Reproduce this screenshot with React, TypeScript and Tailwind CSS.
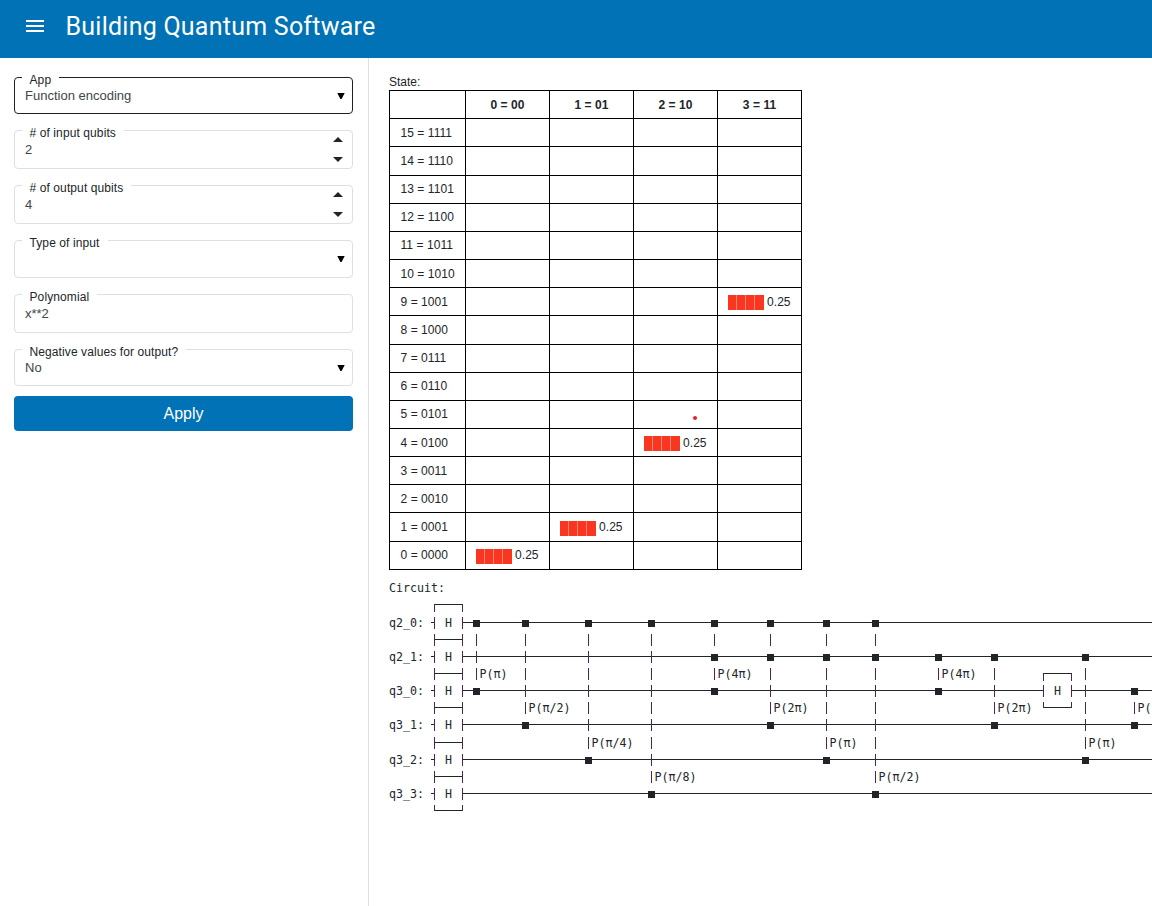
const WIRES = [622, 656, 690, 724, 759, 793];
const GAPS = [639, 673, 707, 742, 776];
const QUBITS = ["q2_0:", "q2_1:", "q3_0:", "q3_1:", "q3_2:", "q3_3:"];

interface Gate {
  x: number;
  controls: number[];
  target: number;
  label: string;
}

const GATES: Gate[] = [
  { x: 476, controls: [0], target: 2, label: "P(π)" },
  { x: 525, controls: [0], target: 3, label: "P(π/2)" },
  { x: 588, controls: [0], target: 4, label: "P(π/4)" },
  { x: 651, controls: [0], target: 5, label: "P(π/8)" },
  { x: 714, controls: [0, 1], target: 2, label: "P(4π)" },
  { x: 770, controls: [0, 1], target: 3, label: "P(2π)" },
  { x: 826, controls: [0, 1], target: 4, label: "P(π)" },
  { x: 875, controls: [0, 1], target: 5, label: "P(π/2)" },
  { x: 938, controls: [1], target: 2, label: "P(4π)" },
  { x: 994, controls: [1], target: 3, label: "P(2π)" },
  { x: 1085, controls: [1], target: 4, label: "P(π)" },
  { x: 1134, controls: [2], target: 3, label: "P(" },
];

function HLine({ x1, x2, y }: { x1: number; x2: number; y: number }) {
  return <rect x={x1} y={y} width={x2 - x1} height={1} />;
}

function VLine({ x, y1, y2 }: { x: number; y1: number; y2: number }) {
  return <rect x={x} y={y1} width={1} height={y2 - y1} className="fill-[#4c2458]" />;
}

function Phase({ gate }: { gate: Gate }) {
  const first = gate.controls[0];
  const dots = [...gate.controls, gate.target];
  const rows = WIRES.map((_, i) => i).filter((i) => i >= first && i <= gate.target);
  return (
    <g>
      {rows.map((i) =>
        dots.includes(i) ? (
          <rect key={i} x={gate.x - 3} y={WIRES[i] - 2} width={7} height={7} />
        ) : (
          <VLine key={i} x={gate.x} y1={WIRES[i] - 5} y2={WIRES[i] + 7} />
        ),
      )}
      {rows.slice(0, -1).map((i) => (
        <VLine key={i} x={gate.x} y1={GAPS[i] - 5} y2={GAPS[i] + 7} />
      ))}
      <text x={gate.x + 3.5} y={GAPS[gate.target - 1] + 5}>
        {gate.label}
      </text>
    </g>
  );
}

function Circuit() {
  return (
    <svg
      width="763"
      height="240"
      viewBox="389 578 763 240"
      shapeRendering="crispEdges"
      className="block fill-[#212529] font-['DejaVu_Sans_Mono',monospace] text-[11.63px]"
    >
      <text x="389" y="592">Circuit:</text>
      {QUBITS.map((q, i) => (
        <g key={q}>
          <text x="389" y={WIRES[i] + 5}>{q}</text>
          <text x="445" y={WIRES[i] + 5}>H</text>
          <HLine x1={431} x2={434} y={WIRES[i]} />
          {i === 2 ? (
            <>
              <HLine x1={462} x2={1043} y={WIRES[i]} />
              <HLine x1={1071} x2={1152} y={WIRES[i]} />
            </>
          ) : (
            <HLine x1={462} x2={1152} y={WIRES[i]} />
          )}
          <VLine x={434} y1={WIRES[i] - 5} y2={WIRES[i] + 7} />
          <VLine x={462} y1={WIRES[i] - 5} y2={WIRES[i] + 7} />
        </g>
      ))}
      <HLine x1={434} x2={463} y={604} />
      <VLine x={434} y1={604} y2={612} />
      <VLine x={462} y1={604} y2={612} />
      {GAPS.map((y) => (
        <g key={y}>
          <HLine x1={434} x2={463} y={y} />
          <VLine x={434} y1={y - 5} y2={y + 7} />
          <VLine x={462} y1={y - 5} y2={y + 7} />
        </g>
      ))}
      <HLine x1={434} x2={463} y={810} />
      <VLine x={434} y1={805} y2={811} />
      <VLine x={462} y1={805} y2={811} />

      <HLine x1={1043} x2={1072} y={673} />
      <HLine x1={1043} x2={1072} y={707} />
      {[1043, 1071].map((x) => (
        <g key={x}>
          <VLine x={x} y1={673} y2={681} />
          <VLine x={x} y1={685} y2={697} />
          <VLine x={x} y1={702} y2={708} />
        </g>
      ))}
      <text x="1054" y="695">H</text>
      {GATES.map((g) => (
        <Phase key={g.x} gate={g} />
      ))}
    </svg>
  );
}

function Bar() {
  return (
    <div className="flex h-full items-center pl-[10px]">
      <span className="mt-[2px] flex h-[15px] w-9 gap-px bg-[#fb8a7c]">
        <span className="w-[8px] bg-[#fa3620]" />
        <span className="w-[8px] bg-[#fa3620]" />
        <span className="w-[8px] bg-[#fa3620]" />
        <span className="w-[9px] bg-[#fa3620]" />
      </span>
      <span className="ml-[3px]">0.25</span>
    </div>
  );
}

const HEADS = ["0 = 00", "1 = 01", "2 = 10", "3 = 11"];
const FILLED: Record<number, number> = { 9: 3, 4: 2, 1: 1, 0: 0 };
const STATES = Array.from({ length: 16 }, (_, i) => 15 - i);

function StateTable() {
  return (
    <div className="mt-[0.125px] w-[413px] border-t border-l border-black text-xs tracking-[0.06px]">
      <div className="-mt-px grid h-[28.16px] grid-cols-[76px_84px_84px_84px_84px] font-bold">
        <div className="border-r border-black" />
        {HEADS.map((h) => (
          <div key={h} className="flex items-center justify-center border-r border-black pt-px">
            {h}
          </div>
        ))}
      </div>
      {STATES.map((n) => (
        <div
          key={n}
          className="grid h-[28.16px] grid-cols-[76px_84px_84px_84px_84px] border-t border-black last:h-[29.16px] last:border-b"
        >
          <div className="flex items-center border-r border-black pl-[10.5px]">
            {n} = {n.toString(2).padStart(4, "0")}
          </div>
          {HEADS.map((h, c) => (
            <div key={h} className="relative border-r border-black">
              {FILLED[n] === c && <Bar />}
              {n === 5 && c === 2 && (
                <span className="absolute top-[15px] left-[59px] size-1 rounded-full bg-[#ee1c25]" />
              )}
            </div>
          ))}
        </div>
      ))}
    </div>
  );
}

function Triangle({ up = false, wide = false }: { up?: boolean; wide?: boolean }) {
  return wide ? (
    <svg width="10" height="5" viewBox="0 0 10 5" className="fill-[#212529]">
      <path d={up ? "M0 5 5 0 10 5Z" : "M0 0 5 5 10 0Z"} />
    </svg>
  ) : (
    <svg width="8" height="6" viewBox="0 0 8 6" className="fill-black">
      <path d="M0.3 0H7.7L4.6 6H3.4Z" />
    </svg>
  );
}

interface FieldProps {
  label: string;
  value: string;
  kind: "select" | "number" | "text";
  box: string;
}

function Field({ label, value, kind, box }: FieldProps) {
  return (
    <div className={`relative flex justify-between rounded-[4px] border pl-[10px] ${box}`}>
      <span className="absolute -top-[7px] left-[7px] bg-white pr-[8px] pl-[7.5px] text-xs leading-[18px] tracking-[0.1px] text-[#212529]">
        {label}
      </span>
      <span
        className={`text-[13px] leading-4 text-[#40464c] ${kind === "select" ? "pt-[10px]" : "pt-[11px]"}`}
      >
        {value}
      </span>
      {kind === "select" && (
        <span className="pt-[15px] pr-[7px]">
          <Triangle />
        </span>
      )}
      {kind === "number" && (
        <span className="flex flex-col gap-[15px] pt-[6px] pr-[9px]">
          <Triangle up wide />
          <Triangle wide />
        </span>
      )}
    </div>
  );
}

export default function App() {
  return (
    <div className="flex h-[906px] w-[1152px] flex-col overflow-hidden bg-white font-['Liberation_Sans',Arial,sans-serif] text-[#212529]">
      <header className="flex h-[58px] shrink-0 items-center bg-[#0072b5] pb-[5px] text-white">
        <svg
          width="18"
          height="12"
          viewBox="0 0 18 12"
          className="mb-px ml-[26px] fill-white"
          shapeRendering="crispEdges"
        >
          <path d="M0 0H18V2H0ZM0 5H18V7H0ZM0 10H18V12H0Z" />
        </svg>
        <h1 className="ml-[21.5px] font-['Roboto',sans-serif] text-[25px] leading-8 tracking-[0.24px]">
          Building Quantum Software
        </h1>
      </header>
      <div className="flex min-h-0 flex-1">
        <aside className="w-[369px] shrink-0 border-r border-[#dfdfdf] pt-[19px] pr-[15px] pl-[14px]">
          <Field label="App" value="Function encoding" kind="select" box="h-[37px] border-[#212121]" />
          <Field label="# of input qubits" value="2" kind="number" box="mt-4 h-[39px] border-[#dfdfdf]" />
          <Field label="# of output qubits" value="4" kind="number" box="mt-4 h-[39px] border-[#dfdfdf]" />
          <Field label="Type of input" value="" kind="select" box="mt-4 h-[38px] border-[#dfdfdf]" />
          <Field label="Polynomial" value="x**2" kind="text" box="mt-4 h-[39px] border-[#dfdfdf]" />
          <Field label="Negative values for output?" value="No" kind="select" box="mt-4 h-[37px] border-[#dfdfdf]" />
          <button className="mt-[10px] flex h-[35px] w-full items-center justify-center rounded-[4px] bg-[#0072b5] text-base text-white">
            Apply
          </button>
        </aside>
        <main className="flex min-w-0 flex-1 flex-col pt-4 pl-5">
          <div className="h-4 shrink-0 text-xs leading-4">State:</div>
          <div className="flex h-[488px] shrink-0 items-start">
            <StateTable />
          </div>
          <Circuit />
        </main>
      </div>
    </div>
  );
}
